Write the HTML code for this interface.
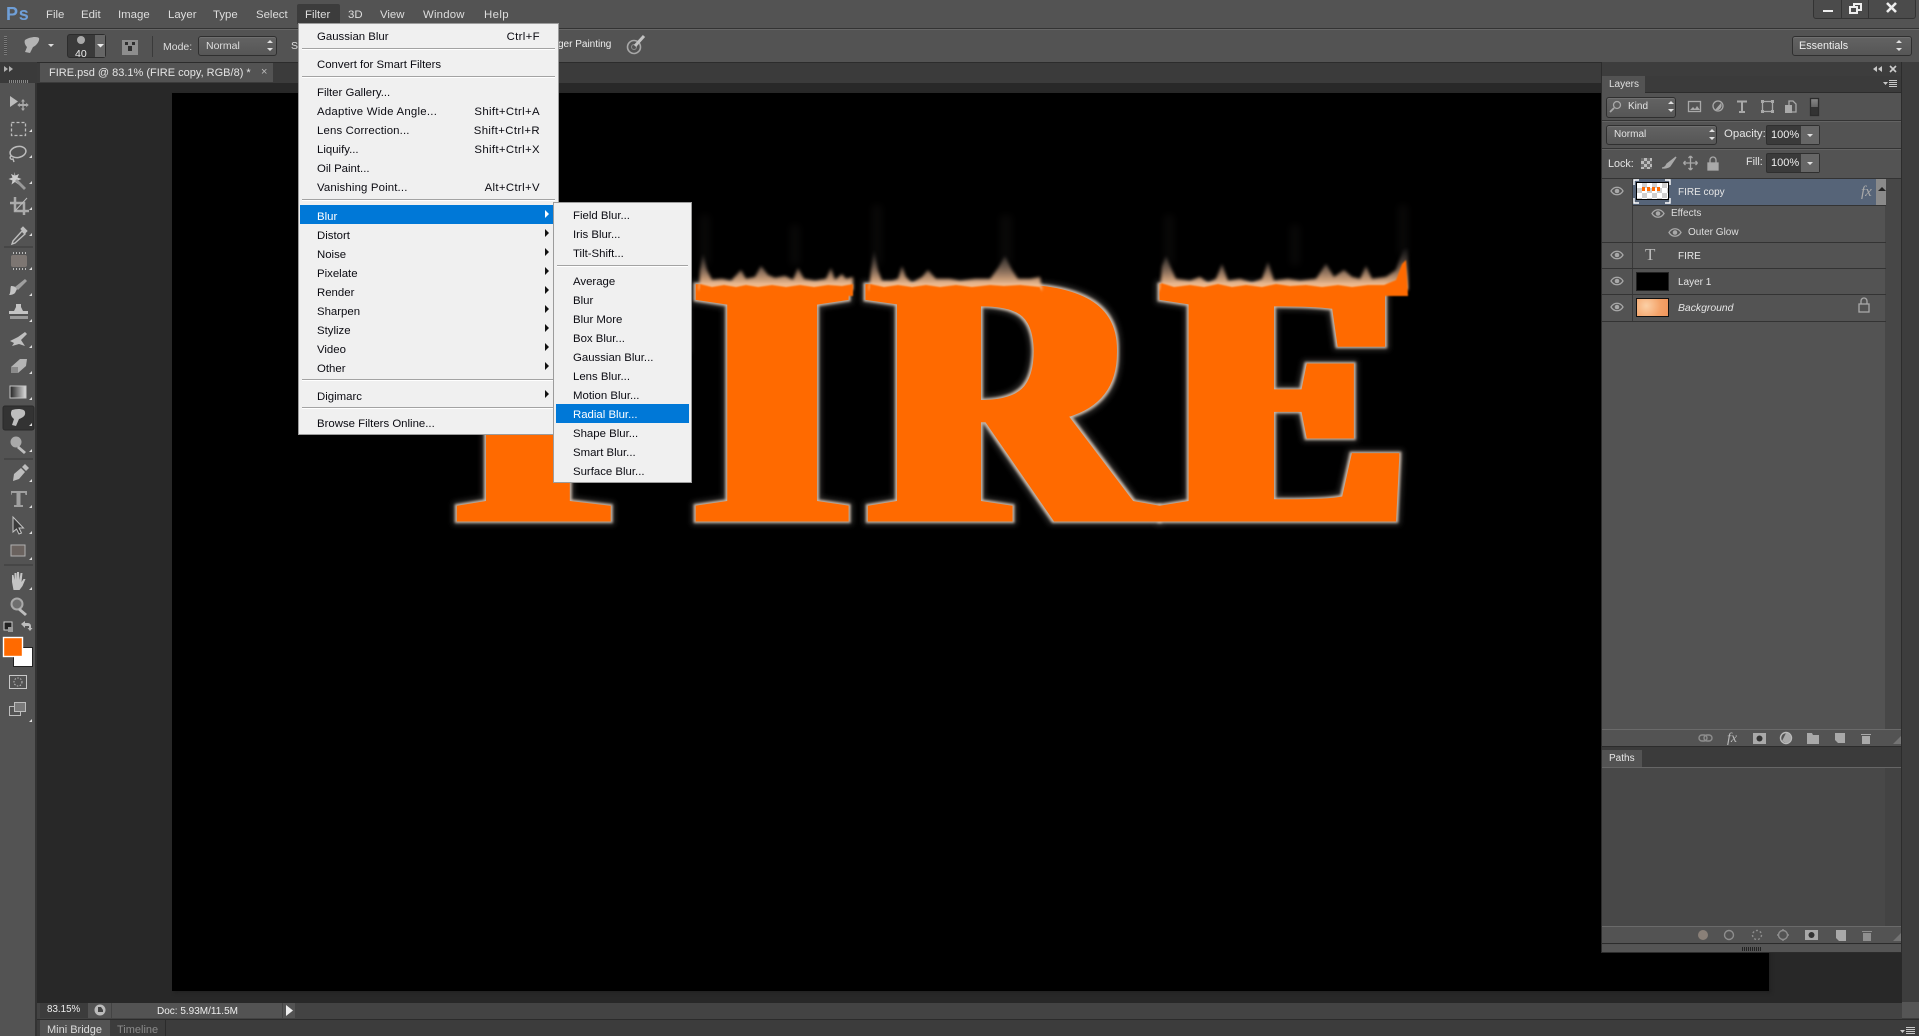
<!DOCTYPE html>
<html><head><meta charset="utf-8"><title>FIRE.psd</title>
<style>
html,body{margin:0;padding:0;background:#282828;width:1919px;height:1036px;overflow:hidden}
body{position:relative;font-family:"Liberation Sans",sans-serif;font-size:11.4px;color:#dedede}
.a{position:absolute}
.t{position:absolute;white-space:nowrap;height:14px;line-height:14px;margin-top:1px}
.p{font-size:10px}
.m{color:#0b0b12}
.w{color:#fff}
.s{letter-spacing:.35px}
.sel{position:absolute;background:linear-gradient(#636363,#565656);border:1px solid #2f2f2f;border-radius:3px;box-shadow:inset 0 1px 0 #707070;box-sizing:border-box}
.inp{position:absolute;background:#3a3a3a;border:1px solid #2f2f2f;border-radius:2px;box-sizing:border-box}
.sep{position:absolute;height:1px;background:#a3a3a3;box-shadow:0 1px 0 #fff}
.ln{position:absolute;height:1px;background:#333}
svg{position:absolute;left:0;top:0;overflow:visible}
.arr{position:absolute;width:0;height:0;border-left:4px solid #111;border-top:4px solid transparent;border-bottom:4px solid transparent;left:545px}
</style></head><body>

<!-- base chrome -->
<div class="a" style="left:0;top:0;width:1919px;height:28px;background:#535353;border-bottom:1px solid #333;box-sizing:content-box"></div>
<div class="a" style="left:0;top:29px;width:1919px;height:33px;background:#535353;border-top:1px solid #666;box-sizing:border-box"></div>
<div class="a" style="left:0;top:62px;width:1919px;height:21px;background:#3b3b3b;border-top:1px solid #2c2c2c;box-sizing:border-box"></div>
<div class="a" style="left:0;top:62px;width:37px;height:974px;background:#535353;border-right:2px solid #333;box-sizing:border-box"></div>
<div class="a" style="left:0;top:62px;width:37px;height:21px;background:#3a3a3a"></div>
<div class="a" style="left:40px;top:63px;width:233px;height:19px;background:#535353"></div>
<div class="a" style="left:37px;top:83px;width:1866px;height:920px;background:#282828"></div>
<div class="a" style="left:172px;top:93px;width:1597px;height:898px;background:#000;box-shadow:2px 2px 3px #222"></div>

<!-- artwork -->
<svg width="1919" height="1036" viewBox="0 0 1919 1036">
<defs>
<filter id="fat" filterUnits="userSpaceOnUse" x="300" y="150" width="1300" height="500"><feMorphology operator="dilate" radius="13 1.5"/></filter>
<filter id="fatg" filterUnits="userSpaceOnUse" x="300" y="150" width="1300" height="500"><feMorphology operator="dilate" radius="15 3"/><feGaussianBlur stdDeviation="1.3"/></filter>
<filter id="fatb" filterUnits="userSpaceOnUse" x="300" y="150" width="1300" height="500"><feMorphology operator="dilate" radius="17 5"/><feGaussianBlur stdDeviation="3"/></filter>
<filter id="fat2" filterUnits="userSpaceOnUse" x="300" y="150" width="1300" height="500"><feMorphology operator="dilate" radius="16 1.5"/></filter>
<filter id="fatg2" filterUnits="userSpaceOnUse" x="300" y="150" width="1300" height="500"><feMorphology operator="dilate" radius="18 3"/><feGaussianBlur stdDeviation="1.3"/></filter>
<filter id="fatb2" filterUnits="userSpaceOnUse" x="300" y="150" width="1300" height="500"><feMorphology operator="dilate" radius="20 5"/><feGaussianBlur stdDeviation="3"/></filter>
<filter id="b2" filterUnits="userSpaceOnUse" x="600" y="180" width="900" height="200"><feGaussianBlur stdDeviation="1.5"/></filter>
<filter id="b2o" filterUnits="userSpaceOnUse" x="600" y="180" width="900" height="200"><feGaussianBlur stdDeviation=".8"/></filter>
<filter id="b3" filterUnits="userSpaceOnUse" x="600" y="180" width="900" height="200"><feGaussianBlur stdDeviation="4"/></filter>
<linearGradient id="fl" gradientUnits="userSpaceOnUse" x1="0" y1="246" x2="0" y2="288">
<stop offset="0" stop-color="#777" stop-opacity="0"/>
<stop offset=".4" stop-color="#a08878" stop-opacity=".5"/>
<stop offset=".78" stop-color="#d8a882" stop-opacity=".9"/>
<stop offset="1" stop-color="#f8c498"/>
</linearGradient>
</defs>
<g font-family="'Liberation Serif',serif" font-weight="700" font-size="358">
<g fill="#4a4644" opacity=".7">
<g filter="url(#fatb)"><text transform="translate(461,520) scale(1.05,1)">F</text><text transform="translate(872,520) scale(1.05,1)">R</text></g>
<g filter="url(#fatb2)"><text transform="translate(699,520) scale(1.05,1)">I</text><text transform="translate(1169.500,520) scale(.97,1)">E</text></g>
</g>
<g fill="#c6b6a8">
<g filter="url(#fatg)"><text transform="translate(461,520) scale(1.05,1)">F</text><text transform="translate(872,520) scale(1.05,1)">R</text></g>
<g filter="url(#fatg2)"><text transform="translate(699,520) scale(1.05,1)">I</text><text transform="translate(1169.500,520) scale(.97,1)">E</text></g>
</g>
<g fill="#ff6a00">
<g filter="url(#fat)"><text transform="translate(461,520) scale(1.05,1)">F</text><text transform="translate(872,520) scale(1.05,1)">R</text></g>
<g filter="url(#fat2)"><text transform="translate(699,520) scale(1.05,1)">I</text><text transform="translate(1169.500,520) scale(.97,1)">E</text></g>
</g>
</g>
<g fill="#6a625c" opacity=".09" filter="url(#b3)">
<path d="M700 215h10v50h-10zM790 225h10v40h-10zM872 205h10v60h-10zM1000 215h12v50h-12zM1164 215h10v50h-10zM1290 225h10v40h-10zM1398 205h10v50h-10z"/>
</g>
<g fill="url(#fl)" filter="url(#b2)">
<path d="M699 290L700 270 703 254 707 270 712 280 722 279 731 281 741 270 746 279 755 277 761 266 768 275 775 278 785 276 793 280 798 268 804 279 815 281 826 279 831 268 835 280 842 274 846 279 853 277 853 290Z"/>
<path d="M869 290L871 270 874 250 878 270 882 281 892 281 898 279 902 266 906 277 912 283 922 277 928 270 936 279 950 279 960 281 975 279 990 279 998 268 1005 256 1012 270 1018 279 1030 279 1040 277 1042 290Z"/>
<path d="M1160 290L1162 266 1166 256 1171 268 1176 279 1190 281 1200 277 1208 283 1216 279 1222 264 1228 281 1240 279 1252 283 1262 279 1268 262 1274 281 1288 279 1300 281 1316 279 1326 264 1334 277 1344 270 1352 277 1360 279 1366 266 1372 279 1386 277 1396 270 1403 250 1408 248 1408 290Z"/>
</g>
<g fill="#ff6a00" filter="url(#b2o)">
<path d="M699 296L700 284 712 287 724 285 736 287 746 285 758 287 772 285 786 287 800 285 814 287 828 285 842 286 853 284 853 296Z"/>
<path d="M869 296L870 284 884 287 898 285 912 287 926 285 940 287 956 285 972 287 990 285 1004 286 1020 285 1040 287 1042 296Z"/>
<path d="M1160 296L1161 283 1174 287 1190 285 1204 287 1218 284 1232 287 1246 285 1262 287 1276 284 1290 286 1306 285 1322 287 1338 285 1352 287 1368 285 1384 285 1396 280 1402 264 1406 260 1408 296Z"/>
</g>
</svg>

<!-- Menu bar -->
<div class="t" style="left:6px;top:6px;height:16px;line-height:16px;font-size:18px;font-weight:700;color:#6f9fd8;letter-spacing:.8px;margin:0">Ps</div>
<div class="a" style="left:297px;top:4px;width:43px;height:20px;background:#3c3c3c;border-radius:2px 2px 0 0"></div>
<div class="t" style="left:46px;top:7px">File</div>
<div class="t" style="left:81px;top:7px">Edit</div>
<div class="t" style="left:118px;top:7px">Image</div>
<div class="t" style="left:168px;top:7px">Layer</div>
<div class="t" style="left:213px;top:7px">Type</div>
<div class="t" style="left:256px;top:7px">Select</div>
<div class="t" style="left:305px;top:7px">Filter</div>
<div class="t" style="left:348px;top:7px">3D</div>
<div class="t" style="left:380px;top:7px">View</div>
<div class="t" style="left:423px;top:7px;letter-spacing:.2px">Window</div>
<div class="t" style="left:484px;top:7px;letter-spacing:.4px">Help</div>

<!-- window controls -->
<div class="a" style="left:1813px;top:-2px;width:103px;height:21px;background:#4b4b4b;border:1px solid #333;border-radius:3px;box-sizing:border-box"></div>
<div class="a" style="left:1841px;top:0;width:1px;height:18px;background:#333"></div>
<div class="a" style="left:1868px;top:0;width:1px;height:18px;background:#333"></div>
<svg width="1919" height="1036"><g fill="none" stroke="#eee" stroke-width="2"><path d="M1823 11h10"/><path d="M1850 7h7v6h-7zM1854 7V4h7v6h-4"/><path d="M1887 3l9 9M1896 3l-9 9" stroke-width="2.6"/></g></svg>

<!-- options bar -->
<div class="a" style="left:4px;top:36px;width:3px;height:19px;background:repeating-linear-gradient(#7a7a7a 0 1px,#444 1px 2px)"></div>
<div class="a" style="left:67px;top:34px;width:39px;height:24px;background:#3a3a3a;border:1px solid #2c2c2c;border-radius:3px;box-sizing:border-box"></div>
<div class="a" style="left:95px;top:35px;width:10px;height:22px;background:#666"></div>
<div class="t" style="left:75px;top:46px;font-size:10.5px;color:#eee">40</div>
<div class="a" style="left:152px;top:36px;width:1px;height:21px;background:#3a3a3a"></div>
<div class="t" style="left:163px;top:39px;font-size:10.5px">Mode:</div>
<div class="sel" style="left:198px;top:36px;width:79px;height:20px"></div>
<div class="t" style="left:206px;top:38px;font-size:10.5px">Normal</div>
<div class="t" style="left:291px;top:38px;font-size:10.5px">S</div>
<div class="t" style="left:558px;top:37px;font-size:10px;color:#eee">ger Painting</div>
<div class="sel" style="left:1792px;top:36px;width:120px;height:20px"></div>
<div class="t" style="left:1799px;top:38px;font-size:10.8px;color:#eee">Essentials</div>

<svg width="1919" height="1036">
<path d="M25 40c4-3 12-4 14-2 1 3-3 8-6 9l-3 6-5-1 2-5c-2-2-3-5-2-7z" fill="#b4b4b4"/>
<path d="M48 44h6l-3 3z" fill="#ddd"/>
<path d="M97 44h7l-3.500 3.500z" fill="#eee"/>
<circle cx="81" cy="40" r="4" fill="#d8d8d8" opacity=".7"/>
<path d="M122 40h16v15h-16z" fill="#8d8d8d"/><path d="M125 42h3v3h-3zM132 42h3v3h-3zM128 46h4v5h-4z" fill="#2e2e2e"/>
<path d="M1896 43l3-3 3 3zM1896 48l3 3 3-3zM267 43l3-3 3 3zM267 48l3 3 3-3z" fill="#e0e0e0"/>
<circle cx="634" cy="47" r="6.500" fill="none" stroke="#a8a8a8" stroke-width="1.600"/>
<circle cx="634" cy="47" r="2.500" fill="none" stroke="#8c8c8c"/>
<path d="M635 46l9-10" stroke="#c2c2c2" stroke-width="3" fill="none"/>
</svg>

<!-- doc tab -->
<div class="t" style="left:49px;top:65px;color:#e4e4e4;font-size:11px">FIRE.psd @ 83.1% (FIRE copy, RGB/8) *</div>
<div class="t" style="left:261px;top:64px;font-size:11px;color:#bbb">×</div>

<!-- Toolbar icons -->
<svg width="1919" height="1036">
<defs><linearGradient id="gr"><stop offset="0" stop-color="#222"/><stop offset="1" stop-color="#ddd"/></linearGradient></defs>
<g fill="#bdbdbd" stroke="none">
<path d="M4 66l4 3-4 3zM9 66l4 3-4 3z" fill="#b0b0b0"/>
<path d="M9 80h1v3h-1zM11 80h1v3h-1zM13 80h1v3h-1zM15 80h1v3h-1zM17 80h1v3h-1zM19 80h1v3h-1zM21 80h1v3h-1zM23 80h1v3h-1zM25 80h1v3h-1zM27 80h1v3h-1z" fill="#888"/>
<path d="M10 96v11l8-5.500z"/>
<path d="M23 99l2 2.500h-1.300v2.500h2.500v-1.300l2.500 2.300-2.500 2.300v-1.300h-2.500v2.500h1.300l-2 2.500-2-2.500h1.300v-2.500h-2.500v1.300l-2.500-2.300 2.500-2.300v1.300h2.500v-2.500h-1.300z" fill="#a8a8a8"/>
<path d="M14 172l1.500 3.500 3.500-1.500-1.500 3.500 4 1.500-4 1.500 1 4-3.500-2.500-3.500 2.500 1-4-4-1.500 4-1.500-1.500-3.500 3.500 1.500z" fill="#ccc"/>
<path d="M17 179l9 9-2 2-9-9z" fill="#9a9a9a"/>
<path d="M13 255h12a2 2 0 0 1 2 2v8a2 2 0 0 1-2 2H13a2 2 0 0 1-2-2v-8a2 2 0 0 1 2-2z" fill="#7d7672"/>
<path d="M13 252h1v2h-1zM16 252h1v2h-1zM19 252h1v2h-1zM22 252h1v2h-1zM25 252h1v2h-1zM13 268h1v2h-1zM16 268h1v2h-1zM19 268h1v2h-1zM22 268h1v2h-1zM25 268h1v2h-1z" fill="#bbb"/>
<path d="M11 286c3 0 5 1 6 3l-2 4c-2 2-5 2-6 2 2-2 1-7 2-9z" fill="#c4c4c4"/>
<path d="M15 287l10-8 2 2-9 9z" fill="#9f9f9f"/>
<path d="M16 304h5v3l2 4h5v3H9v-3h5l2-4z" fill="#c4c4c4"/>
<path d="M10 316h18v3H10z" fill="#9a9a9a"/>
<path d="M10 341l8-4 7-5 2 2-6 6 4 6-6-2-7 2 2-3z" fill="#bfbfbf"/>
<path d="M11 367l9-8h7l-1 7-8 7h-7z" fill="#b4b4b4"/>
<path d="M11 367h7v6h-7z" fill="#8a8a8a"/>
</g>
<rect x="10" y="386" width="16" height="12" fill="url(#gr)" stroke="#c4c4c4"/>
<rect x="3" y="406" width="31" height="24" rx="2" fill="#333" stroke="#2a2a2a"/>
<path d="M12 410c6-2 13-1 13 2 1 4-3 6-6 7l-3 7-4-1 2-6c-3-2-4-6-2-9z" fill="#bebebe"/>
<g fill="#bdbdbd">
<circle cx="16" cy="442" r="5.500" fill="#a9a9a9"/><path d="M19 446l7 6-2 2-7-6z"/>
<path d="M13 481l1-7 7-6 4 4-6 7zM11 483l5-4"/>
<path d="M22 467l3-3 4 4-3 3z"/>
<path d="M11 491h16v4h-1.500l-.5-2h-4.500v12h2.500v2h-9v-2h2.500v-12h-4.500l-.5 2H11z" fill="#9f9f9f"/>
<path d="M13 517v15l3.500-3 2.500 5 2.500-1-2.500-5h4.500z" fill="#3a3a3a" stroke="#c4c4c4"/>
<rect x="11" y="545" width="14" height="11" fill="#6a625e" stroke="#b0b0b0"/>
<path d="M12 582v-7l1.500 0 1 5v-7h2l.5 7v-8h2l.5 8 1-7h2l-1 9 2-3h2l-3 7-3 4h-6z" fill="#c4c4c4"/>
<circle cx="17" cy="604" r="5.500" fill="#6f6f6f" stroke="#a9a9a9" stroke-width="2"/><path d="M20 608l7 6-2 2-7-6z"/>
<path d="M4 622h8v8H4z" fill="#222" stroke="#ccc"/><path d="M8 627h5v5H8z" fill="#999"/>
<path d="M21 624l4-3v2h3a3 3 0 0 1 3 3v2h1.500l-2.500 3-2.500-3h1.500v-2h-4v2z" fill="#bdbdbd"/>
<path d="M29 132h3v-3zM29 158h3v-3zM29 184h3v-3zM29 210h3v-3zM29 236h3v-3zM29 270h3v-3zM29 296h3v-3zM29 322h3v-3zM29 348h3v-3zM29 374h3v-3zM29 400h3v-3zM29 426h3v-3zM29 452h3v-3zM29 482h3v-3zM29 508h3v-3zM29 534h3v-3zM29 560h3v-3zM29 590h3v-3zM29 722h3v-3z" fill="#ddd"/>
</g>
<g fill="none" stroke="#bdbdbd">
<rect x="11.500" y="122.500" width="14" height="13" stroke-dasharray="3 2" stroke-width="1.300"/>
<ellipse cx="18" cy="152" rx="8" ry="5.500" stroke-width="1.500" transform="rotate(-12 18 152)"/>
<path d="M11 156c-2 2 0 4 2 3l1 3" stroke-width="1.400"/>
<path d="M10 203h14v12M15 197v14h14" stroke-width="2.500" stroke="#aaa"/>
<path d="M15 211l12-13" stroke-width="1"/>
<path d="M13 241l9-10 3 3-10 9-3 1z" stroke-width="1.400"/><path d="M21 229l2-2 4 4-2 2z" fill="#bdbdbd"/>
<rect x="9.500" y="675.500" width="17" height="13" stroke="#c8c8c8"/>
<circle cx="18" cy="682" r="4" stroke-dasharray="1.500 1.500"/>
<rect x="9.500" y="706.500" width="11" height="9"/><rect x="14.500" y="702.500" width="11" height="9" fill="#7a7a7a"/>
<path d="M4 247h29M4 459h29M4 565h29" stroke="#3a3a3a"/>
</g>
<rect x="13.500" y="647.500" width="19" height="19" fill="#fff" stroke="#222"/>
<rect x="3.500" y="637.500" width="19" height="19" fill="#ff6a00" stroke="#fff" stroke-width="1.400"/>
</svg>

<!-- Filter menu -->
<div class="a" style="left:298px;top:23px;width:261px;height:412px;background:#f0f0f0;border:1px solid #9c9c9c;box-sizing:border-box"></div>
<div class="t m" style="left:317px;top:29px">Gaussian Blur</div><div class="t m s" style="right:1379px;top:29px">Ctrl+F</div>
<div class="sep" style="left:302px;top:48px;width:253px"></div>
<div class="t m" style="left:317px;top:57px">Convert for Smart Filters</div>
<div class="sep" style="left:302px;top:76px;width:253px"></div>
<div class="t m" style="left:317px;top:85px">Filter Gallery...</div>
<div class="t m" style="left:317px;top:104px;letter-spacing:.25px">Adaptive Wide Angle...</div><div class="t m s" style="right:1379px;top:104px">Shift+Ctrl+A</div>
<div class="t m" style="left:317px;top:123px;letter-spacing:.15px">Lens Correction...</div><div class="t m s" style="right:1379px;top:123px">Shift+Ctrl+R</div>
<div class="t m" style="left:317px;top:142px">Liquify...</div><div class="t m s" style="right:1379px;top:142px">Shift+Ctrl+X</div>
<div class="t m" style="left:317px;top:161px">Oil Paint...</div>
<div class="t m" style="left:317px;top:180px;letter-spacing:.15px">Vanishing Point...</div><div class="t m s" style="right:1379px;top:180px">Alt+Ctrl+V</div>
<div class="sep" style="left:302px;top:199px;width:253px"></div>
<div class="a" style="left:300px;top:205px;width:254px;height:19px;background:#0078d7"></div>
<div class="t w" style="left:317px;top:209px">Blur</div>
<div class="t m" style="left:317px;top:228px">Distort</div>
<div class="t m" style="left:317px;top:247px">Noise</div>
<div class="t m" style="left:317px;top:266px">Pixelate</div>
<div class="t m" style="left:317px;top:285px">Render</div>
<div class="t m" style="left:317px;top:304px">Sharpen</div>
<div class="t m" style="left:317px;top:323px">Stylize</div>
<div class="t m" style="left:317px;top:342px">Video</div>
<div class="t m" style="left:317px;top:361px">Other</div>
<div class="sep" style="left:302px;top:379px;width:253px"></div>
<div class="t m" style="left:317px;top:389px">Digimarc</div>
<div class="sep" style="left:302px;top:407px;width:253px"></div>
<div class="t m" style="left:317px;top:416px">Browse Filters Online...</div>
<div class="arr" style="top:210px;border-left-color:#fff"></div>
<div class="arr" style="top:229px"></div><div class="arr" style="top:248px"></div><div class="arr" style="top:267px"></div><div class="arr" style="top:286px"></div><div class="arr" style="top:305px"></div><div class="arr" style="top:324px"></div><div class="arr" style="top:343px"></div><div class="arr" style="top:362px"></div><div class="arr" style="top:390px"></div>

<!-- Blur submenu -->
<div class="a" style="left:553px;top:202px;width:139px;height:281px;background:#f0f0f0;border:1px solid #9c9c9c;box-sizing:border-box"></div>
<div class="t m" style="left:573px;top:208px">Field Blur...</div>
<div class="t m" style="left:573px;top:227px">Iris Blur...</div>
<div class="t m" style="left:573px;top:246px">Tilt-Shift...</div>
<div class="sep" style="left:557px;top:265px;width:131px"></div>
<div class="t m" style="left:573px;top:274px">Average</div>
<div class="t m" style="left:573px;top:293px">Blur</div>
<div class="t m" style="left:573px;top:312px">Blur More</div>
<div class="t m" style="left:573px;top:331px">Box Blur...</div>
<div class="t m" style="left:573px;top:350px">Gaussian Blur...</div>
<div class="t m" style="left:573px;top:369px">Lens Blur...</div>
<div class="t m" style="left:573px;top:388px">Motion Blur...</div>
<div class="a" style="left:556px;top:404px;width:133px;height:19px;background:#0078d7"></div>
<div class="t w" style="left:573px;top:407px">Radial Blur...</div>
<div class="t m" style="left:573px;top:426px">Shape Blur...</div>
<div class="t m" style="left:573px;top:445px">Smart Blur...</div>
<div class="t m" style="left:573px;top:464px">Surface Blur...</div>

<!-- Status bar -->
<div class="a" style="left:37px;top:1003px;width:1866px;height:16px;background:#434343"></div>
<div class="a" style="left:40px;top:1003px;width:48px;height:15px;background:#3c3c3c"></div>
<div class="a" style="left:88px;top:1003px;width:23px;height:15px;background:#535353"></div>
<div class="a" style="left:112px;top:1003px;width:170px;height:15px;background:#535353"></div>
<div class="a" style="left:283px;top:1003px;width:12px;height:15px;background:#535353"></div>
<div class="t" style="left:47px;top:1002px;font-size:9.8px;color:#eee">83.15%</div>
<div class="t" style="left:157px;top:1004px;font-size:10px;color:#eee">Doc: 5.93M/11.5M</div>
<svg width="1919" height="1036"><circle cx="100" cy="1010" r="5.500" fill="#bbb"/><path d="M98 1007h3l2 3v2h-5z" fill="#444"/><path d="M286 1005l7 5.500-7 5.500z" fill="#eee"/></svg>
<div class="a" style="left:37px;top:1019px;width:1882px;height:1px;background:#2b2b2b"></div>
<div class="a" style="left:37px;top:1020px;width:1882px;height:16px;background:#3c3c3c"></div>
<div class="a" style="left:40px;top:1020px;width:70px;height:16px;background:#535353"></div>
<div class="t" style="left:47px;top:1022px;font-size:11px;color:#dcdcdc">Mini Bridge</div>
<div class="t" style="left:117px;top:1022px;font-size:11px;color:#8a8a8a">Timeline</div>
<div class="a" style="left:165px;top:1020px;width:1px;height:16px;background:#2b2b2b"></div>

<!-- right gutter -->
<div class="a" style="left:1902px;top:62px;width:17px;height:957px;background:#3d3d3d"></div>
<div class="a" style="left:1902px;top:1002px;width:17px;height:16px;background:#555"></div>

<!-- Layers panel -->
<div class="a" style="left:1601px;top:62px;width:301px;height:891px;background:#535353;border:1px solid #2c2c2c;border-width:0 1px 1px 1px;box-sizing:border-box"></div>
<div class="a" style="left:1602px;top:62px;width:299px;height:14px;background:#3d3d3d"></div>
<div class="a" style="left:1602px;top:76px;width:299px;height:17px;background:#3b3b3b;border-bottom:1px solid #2c2c2c;box-sizing:border-box"></div>
<div class="a" style="left:1602px;top:76px;width:43px;height:17px;background:#535353"></div>
<div class="t p" style="left:1609px;top:77px;color:#e0e0e0">Layers</div>
<svg width="1919" height="1036"><g fill="#c8c8c8"><path d="M1873 69l4-3v6zM1878 69l4-3v6z"/><path d="M1890 66l6 6M1896 66l-6 6" stroke="#ccc" stroke-width="1.600"/>
<path d="M1883 82h5l-2.500 3zM1889 80h8v1h-8zM1889 82h8v1h-8zM1889 84h8v1h-8zM1889 86h8v1h-8z"/>
<path d="M1883 758h5l-2.500 3zM1889 755h8v1h-8zM1889 757h8v1h-8zM1889 759h8v1h-8zM1889 761h8v1h-8z"/>
<path d="M1900 1030h5l-2.500 3zM1906 1027h9v1h-9zM1906 1029h9v1h-9zM1906 1031h9v1h-9zM1906 1033h9v1h-9z"/></g></svg>

<div class="sel" style="left:1606px;top:97px;width:70px;height:21px"></div>
<div class="t p" style="left:1628px;top:99px;color:#e4e4e4">Kind</div>
<div class="ln" style="left:1602px;top:120px;width:299px;box-shadow:0 1px 0 #636363"></div>
<div class="sel" style="left:1606px;top:125px;width:111px;height:20px"></div>
<div class="t p" style="left:1614px;top:127px;color:#e4e4e4">Normal</div>
<div class="t" style="left:1724px;top:126px;color:#e4e4e4">Opacity:</div>
<div class="inp" style="left:1766px;top:125px;width:54px;height:20px"></div>
<div class="a" style="left:1801px;top:126px;width:18px;height:18px;background:#666"></div>
<div class="t" style="left:1771px;top:127px;color:#eee;font-size:11px">100%</div>
<div class="ln" style="left:1602px;top:148px;width:299px;box-shadow:0 1px 0 #636363"></div>
<div class="t" style="left:1608px;top:156px;color:#e4e4e4;font-size:10.8px">Lock:</div>
<div class="t" style="left:1746px;top:154px;color:#e4e4e4;font-size:10.8px">Fill:</div>
<div class="inp" style="left:1766px;top:153px;width:54px;height:20px"></div>
<div class="a" style="left:1801px;top:154px;width:18px;height:18px;background:#666"></div>
<div class="t" style="left:1771px;top:155px;color:#eee;font-size:11px">100%</div>
<div class="ln" style="left:1602px;top:178px;width:299px"></div>
<div class="a" style="left:1641px;top:158px;width:11px;height:11px;background:repeating-conic-gradient(#bbb 0 25%,#6d6d6d 0 50%) 0 0/6px 6px"></div>

<!-- layer list -->
<div class="a" style="left:1885px;top:179px;width:16px;height:550px;background:#474747"></div>
<div class="a" style="left:1633px;top:179px;width:243px;height:26px;background:#566478"></div>
<div class="a" style="left:1876px;top:179px;width:10px;height:26px;background:#8a8a8a"></div>
<div class="a" style="left:1632px;top:179px;width:1px;height:142px;background:#383838"></div>
<div class="ln" style="left:1633px;top:205px;width:253px"></div>
<div class="ln" style="left:1602px;top:242px;width:284px"></div>
<div class="ln" style="left:1602px;top:268px;width:284px"></div>
<div class="ln" style="left:1602px;top:294px;width:284px"></div>
<div class="ln" style="left:1602px;top:321px;width:284px"></div>
<div class="a" style="left:1636px;top:182px;width:33px;height:18px;background:repeating-conic-gradient(#cfcfcf 0 25%,#fff 0 50%) 0 0/10px 10px;border:1px solid #000;box-sizing:border-box"></div>
<div class="a" style="left:1642px;top:187px;width:20px;height:4px;background:repeating-linear-gradient(90deg,#ff6a00 0 3px,transparent 3px 5px)"></div>
<svg width="1919" height="1036"><path d="M1639 180h-5v5M1665 180h5v5M1634 198v5h5M1670 198v5h-5" fill="none" stroke="#fff" stroke-width="1.400"/>
<path d="M1878 191l4-4 4 4z" fill="#222"/></svg>
<div class="t p" style="left:1678px;top:185px;color:#e6e6e6">FIRE copy</div>
<div class="t" style="left:1861px;top:184px;font-family:'Liberation Serif',serif;font-style:italic;font-size:15px;color:#aaa">fx</div>
<div class="t p" style="left:1671px;top:206px;color:#dedede">Effects</div>
<div class="t p" style="left:1688px;top:225px;color:#dedede">Outer Glow</div>
<div class="t p" style="left:1678px;top:249px;color:#e6e6e6">FIRE</div>
<div class="t" style="left:1645px;top:247px;font-family:'Liberation Serif',serif;font-size:17px;color:#bbb">T</div>
<div class="a" style="left:1636px;top:272px;width:33px;height:19px;background:#000;border:1px solid #222;box-sizing:border-box"></div>
<div class="t p" style="left:1678px;top:275px;color:#e6e6e6">Layer 1</div>
<div class="a" style="left:1636px;top:298px;width:33px;height:19px;background:radial-gradient(circle at 30% 40%,#fbd0a6,#f4a268 60%,#f0955c);border:1px solid #111;box-sizing:border-box"></div>
<div class="t" style="left:1678px;top:301px;color:#e6e6e6;font-style:italic;font-size:10.4px">Background</div>

<svg width="1919" height="1036">
<defs><linearGradient id="sw" x1="0" y1="0" x2="0" y2="1"><stop offset="0" stop-color="#8a8a8a"/><stop offset=".5" stop-color="#666"/><stop offset=".5" stop-color="#333"/><stop offset="1" stop-color="#333"/></linearGradient></defs>
<g fill="none" stroke="#a8a8a8" stroke-width="1.300">
<path d="M1611 191c3-5 9-5 12 0-3 5-9 5-12 0zM1611 255c3-5 9-5 12 0-3 5-9 5-12 0zM1611 281c3-5 9-5 12 0-3 5-9 5-12 0zM1611 307c3-5 9-5 12 0-3 5-9 5-12 0zM1652 213.500c3-5 9-5 12 0-3 5-9 5-12 0zM1669 232.500c3-5 9-5 12 0-3 5-9 5-12 0z"/>
</g>
<g fill="#a8a8a8"><circle cx="1617" cy="191" r="2.300"/><circle cx="1617" cy="255" r="2.300"/><circle cx="1617" cy="281" r="2.300"/><circle cx="1617" cy="307" r="2.300"/><circle cx="1658" cy="213.500" r="2.300"/><circle cx="1675" cy="232.500" r="2.300"/></g>
<g fill="none" stroke="#a9a9a9" stroke-width="1.300">
<circle cx="1617" cy="105" r="3.500"/><path d="M1614 108l-4 4" stroke-width="1.800"/>
<rect x="1688.500" y="101.500" width="12" height="10"/>
<path d="M1690 110l3-3 2 2 2-3 3 4z" fill="#a9a9a9" stroke="none"/>
<circle cx="1718" cy="106" r="5"/>
<path d="M1737 101.500h10M1742 101.500v10M1739 112h6" stroke-width="2"/>
<rect x="1762.500" y="101.500" width="10" height="10"/>
<path d="M1761 100h3v3h-3zM1771 100h3v3h-3zM1761 110h3v3h-3zM1771 110h3v3h-3z" fill="#a9a9a9" stroke="none"/>
<path d="M1789 105v-4h4l3 3v8h-4"/>
<rect x="1785" y="105" width="7" height="8" fill="#a9a9a9" stroke="none"/>
<rect x="1810.500" y="98.500" width="8" height="17" fill="url(#sw)" stroke="#2c2c2c"/>
<path d="M1662 168c3 0 4-2 5-4l9-7-6 9c-2 2-5 2-8 2z" fill="#a9a9a9"/>
<path d="M1683.500 163h14M1690.500 156v14M1683.500 163l2-2M1683.500 163l2 2M1697.500 163l-2-2M1697.500 163l-2 2M1690.500 156l-2 2M1690.500 156l2 2M1690.500 170l-2-2M1690.500 170l2-2"/>
<rect x="1708" y="163" width="10" height="7" fill="#a9a9a9"/><path d="M1710 163v-3a3 3 0 0 1 6 0v3"/>
<rect x="1859" y="304" width="10" height="8"/><path d="M1861 304v-3a3 3 0 0 1 6 0v3"/>
</g>
<path d="M1721 103a5 5 0 0 1-6 7z" fill="#a9a9a9"/>
<path d="M1668 104l3-3 3 3zM1668 109l3 3 3-3zM1709 132l3-3 3 3zM1709 137l3 3 3-3z" fill="#e0e0e0"/>
<path d="M1807 134h6l-3 3zM1807 162h6l-3 3z" fill="#e0e0e0"/>
</svg>

<!-- layers footer -->
<div class="a" style="left:1602px;top:729px;width:299px;height:18px;background:#535353;border-top:1px solid #6a6a6a;border-bottom:1px solid #2c2c2c;box-sizing:border-box"></div>
<div class="a" style="left:1602px;top:747px;width:299px;height:3px;background:#3b3b3b"></div>
<div class="a" style="left:1602px;top:750px;width:299px;height:18px;background:#3b3b3b;border-bottom:1px solid #666;box-sizing:border-box"></div>
<div class="a" style="left:1602px;top:750px;width:40px;height:17px;background:#535353"></div>
<div class="t p" style="left:1609px;top:751px;color:#e8e8e8">Paths</div>
<div class="a" style="left:1602px;top:768px;width:299px;height:158px;background:#484848"></div>
<div class="a" style="left:1885px;top:768px;width:16px;height:158px;background:#434343"></div>
<div class="a" style="left:1602px;top:926px;width:299px;height:18px;background:#535353;border-top:1px solid #6a6a6a;border-bottom:1px solid #2c2c2c;box-sizing:border-box"></div>
<div class="a" style="left:1602px;top:945px;width:299px;height:7px;background:#555"></div>
<div class="a" style="left:1742px;top:947px;width:19px;height:4px;background:repeating-linear-gradient(90deg,#222 0 1px,transparent 1px 2px)"></div>
<svg width="1919" height="1036">
<g fill="none" stroke="#8e8e8e" stroke-width="1.400">
<rect x="1699" y="735" width="8" height="6" rx="3"/><rect x="1704" y="735" width="8" height="6" rx="3"/>
<circle cx="1786" cy="738" r="5.500" stroke="#bbb"/>
<circle cx="1729" cy="935" r="4.500"/>
<circle cx="1757" cy="935" r="4.500" stroke-dasharray="2 2"/>
<circle cx="1783" cy="935" r="4.500"/><path d="M1783 929v2M1783 939v2M1777 935h2M1787 935h2"/>
</g>
<circle cx="1703" cy="935" r="5" fill="#8a8078"/>
<g fill="#a9a9a9">
<path d="M1753 733h13v11h-13z"/><circle cx="1759.500" cy="738.500" r="3" fill="#333"/>
<path d="M1807 733h5l1 2h6v9h-12z"/>
<path d="M1835 733h10v10h-7l-3-3z"/><path d="M1861 734h10v1h-10zM1862 736h8v8h-8z"/>
<path d="M1805 930h13v10h-13z"/><circle cx="1811.500" cy="935" r="3" fill="#333"/>
<path d="M1836 930h10v11h-7l-3-3z"/><path d="M1862 931h10v1h-10zM1863 933h8v8h-8z" fill="#8f8f8f"/>
<path d="M1786 733a5 5 0 0 1 0 10l-4-2z"/>
</g>
<text x="1727" y="742" font-family="'Liberation Serif',serif" font-style="italic" font-size="14" fill="#bbb">fx</text>
<g fill="#8a8a8a"><path d="M1893 744l8-8v8zM1893 941l8-8v8z" opacity=".6"/></g>
</svg>

</body></html>
